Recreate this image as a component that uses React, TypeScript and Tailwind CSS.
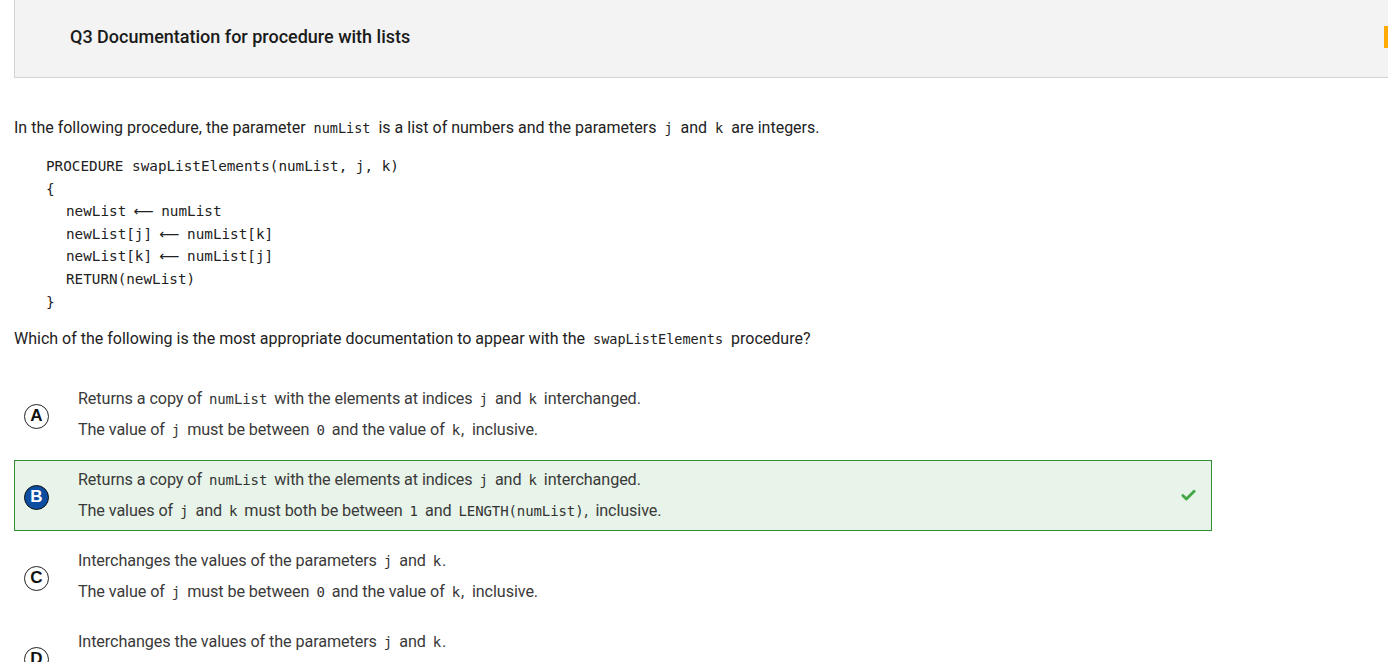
import { Check } from 'lucide-react'

const mono = "font-['DejaVu_Sans_Mono',monospace]"

const C = ({ children }: { children: React.ReactNode }) => (
  <code className={`${mono} text-[13.5px] mx-[8px] text-[#222]`}>{children}</code>
)

// inline code inside the answer options; tight = punctuation follows right after
const OC = ({ children, tight = false }: { children: React.ReactNode; tight?: boolean }) => (
  <code className={`${mono} text-[14px] ml-[7px] ${tight ? 'mr-[1px]' : 'mr-[7px]'} text-[#333]`}>{children}</code>
)

const Arrow = () => (
  <span className="inline-block w-[35px] text-center font-['DejaVu_Sans',sans-serif] text-[14px]">⟵</span>
)

interface OptionProps {
  letter: string
  lines: React.ReactNode[]
  correct?: boolean
}

const Option = ({ letter, lines, correct = false }: OptionProps) => (
  <div
    className={`flex items-center w-[1198px] h-[71px] ${
      correct ? 'bg-[#e8f3e9] border border-[#2f8f34]' : 'border border-transparent'
    }`}
  >
    <div className="w-[63px] pl-[9px] pt-[3px] flex">
      {correct ? (
        <div className="w-[25px] h-[25px] rounded-full bg-[#0c4da2] border border-[#111] flex items-center justify-center text-white font-bold text-[17px] font-['Liberation_Sans',sans-serif]">
          {letter}
        </div>
      ) : (
        <div className="w-[25px] h-[25px] rounded-full border-[1.5px] border-[#222] flex items-center justify-center text-[#111] font-bold text-[17px] font-['Liberation_Sans',sans-serif]">
          {letter}
        </div>
      )}
    </div>
    <div className="flex-1 flex flex-col gap-[11px] font-['Roboto',sans-serif] text-[16.2px] tracking-[-0.1px] text-[#3a3a3a] leading-[19px]">
      {lines.map((l, i) => (
        <div key={i}>{l}</div>
      ))}
    </div>
    {correct && <Check className="w-[17px] h-[17px] text-[#43a847] mr-[14px]" strokeWidth={4} />}
  </div>
)

export default function App() {
  return (
    <div className="w-[1388px] h-[662px] overflow-hidden bg-white font-['Roboto',sans-serif] text-[#222]">
      <div className="ml-[14px] h-[78px] bg-[#f3f3f3] border-l border-b border-[#d4d4d4] flex items-center justify-between pb-[4px]">
        <h1 className="pl-[55px] text-[18px] font-medium text-[#1a1a1a]">Q3 Documentation for procedure with lists</h1>
        <div className="w-[4px] h-[22px] bg-[#ffab00]" />
      </div>

      <div className="px-[14px] pt-[40px]">
        <p className="text-[16px] leading-[20px] text-[#222]">
          In the following procedure, the parameter<C>numList</C>is a list of numbers and the parameters<C>j</C>and
          <C>k</C>are integers.
        </p>

        <div className={`${mono} text-[14.3px] leading-[22.6px] text-[#222] mt-[17px] ml-[32px] whitespace-pre`}>
          <div>PROCEDURE swapListElements(numList, j, k)</div>
          <div>{'{'}</div>
          <div className="pl-[20px]">
            <div>
              newList<Arrow />numList
            </div>
            <div>
              newList[j]<Arrow />numList[k]
            </div>
            <div>
              newList[k]<Arrow />numList[j]
            </div>
            <div>RETURN(newList)</div>
          </div>
          <div>{'}'}</div>
        </div>

        <p className="text-[16px] leading-[20px] text-[#222] mt-[16px]">
          Which of the following is the most appropriate documentation to appear with the<C>swapListElements</C>
          procedure?
        </p>
      </div>

      <div className="px-[14px] pt-[30px] flex flex-col gap-[10px]">
        <Option
          letter="A"
          lines={[
            <>
              Returns a copy of<OC>numList</OC>with the elements at indices<OC>j</OC>and<OC>k</OC>interchanged.
            </>,
            <>
              The value of<OC>j</OC>must be between<OC>0</OC>and the value of<OC tight>k</OC>,&nbsp; inclusive.
            </>,
          ]}
        />
        <Option
          letter="B"
          correct
          lines={[
            <>
              Returns a copy of<OC>numList</OC>with the elements at indices<OC>j</OC>and<OC>k</OC>interchanged.
            </>,
            <>
              The values of<OC>j</OC>and<OC>k</OC>must both be between<OC>1</OC>and<OC tight>LENGTH(numList)</OC>,&nbsp; inclusive.
            </>,
          ]}
        />
        <Option
          letter="C"
          lines={[
            <>
              Interchanges the values of the parameters<OC>j</OC>and<OC tight>k</OC>.
            </>,
            <>
              The value of<OC>j</OC>must be between<OC>0</OC>and the value of<OC tight>k</OC>,&nbsp; inclusive.
            </>,
          ]}
        />
        <Option
          letter="D"
          lines={[
            <>
              Interchanges the values of the parameters<OC>j</OC>and<OC tight>k</OC>.
            </>,
            <>
              The value of<OC>j</OC>must be between<OC>0</OC>and the value of<OC tight>k</OC>,&nbsp; inclusive.
            </>,
          ]}
        />
      </div>
    </div>
  )
}
